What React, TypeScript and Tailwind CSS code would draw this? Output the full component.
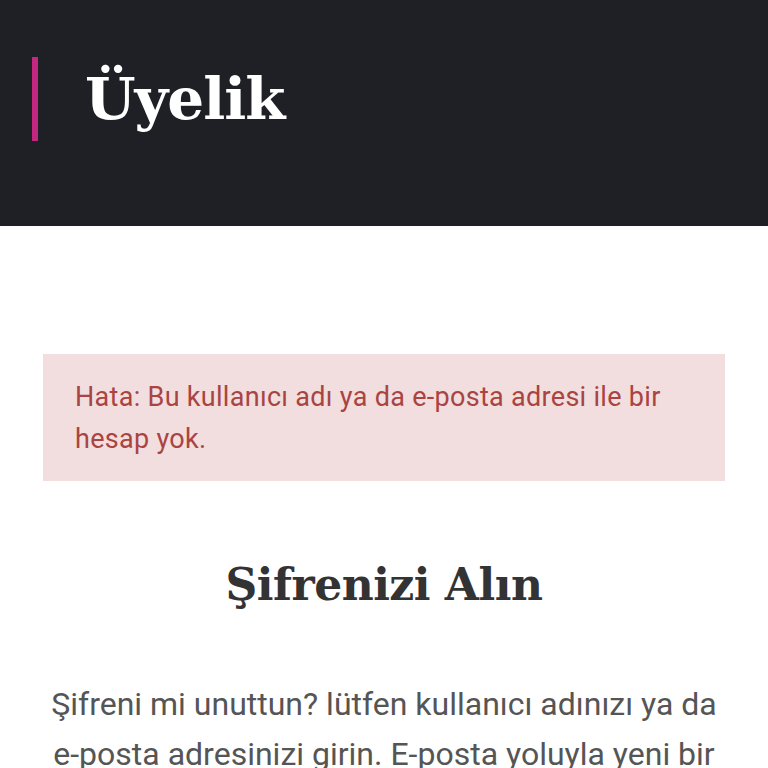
export default function App() {
  return (
    <div className="min-h-screen bg-white" style={{ fontFamily: 'Roboto, "Noto Sans", sans-serif' }}>
      <header className="h-[226px] bg-[#1f2026] pt-[57px] pl-[32px]">
        <div className="flex items-center h-[84px]">
          <div className="w-[6px] h-[84px] bg-[#c2287f]" />
          <h1
            className="ml-[47px] text-[58px] font-bold text-white leading-none tracking-[-1px]"
            style={{ fontFamily: '"DejaVu Serif", serif' }}
          >
            Üyelik
          </h1>
        </div>
      </header>

      <main className="px-[43px] pt-[128px]">
        <div className="bg-[#f2dede] px-[32px] pt-[22px] pb-[21px] text-[#a94442] text-[27px] leading-[42px] tracking-[0.3px]">
          Hata: Bu kullanıcı adı ya da e-posta adresi ile bir hesap yok.
        </div>

        <h2
          className="mt-[82px] text-center text-[44px] font-bold text-[#333333] leading-none tracking-[-0.5px]"
          style={{ fontFamily: '"DejaVu Serif", serif' }}
        >
          Şifrenizi Alın
        </h2>

        <p className="mt-[72px] text-center text-[32px] leading-[50px] text-[#555555]">
          Şifreni mi unuttun? lütfen kullanıcı adınızı ya da e-posta adresinizi girin. E-posta yoluyla yeni bir
          şifre oluşturmak için bir bağlantı alacaksınız.
        </p>
      </main>
    </div>
  );
}
